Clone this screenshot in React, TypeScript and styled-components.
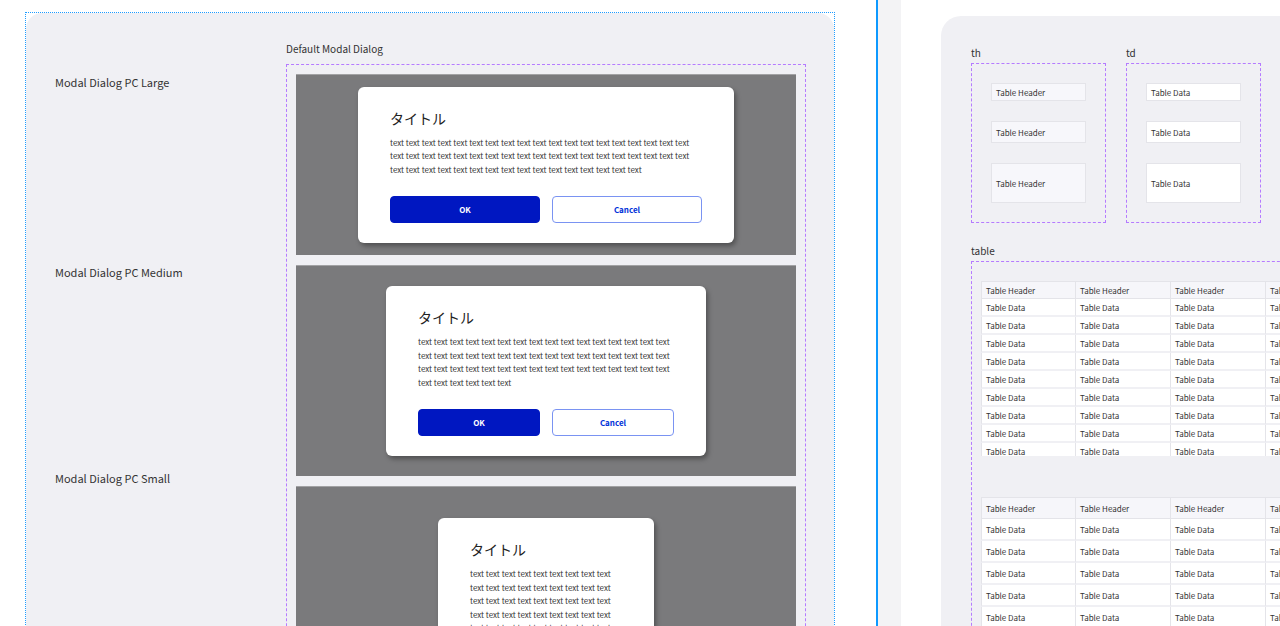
import styled, { createGlobalStyle } from 'styled-components';

const GlobalStyle = createGlobalStyle`
  html, body {
    margin: 0;
    padding: 0;
    background: #ffffff;
    overflow: hidden;
  }
  body {
    font-family: "Noto Sans CJK JP", "Noto Sans", sans-serif;
    color: #333333;
  }
  * {
    box-sizing: border-box;
  }
`;

type Size = 'large' | 'medium' | 'small';

const modalWidth: Record<Size, number> = { large: 376, medium: 320, small: 216 };
const textWidth: Record<Size, number> = { large: 300, medium: 256, small: 152 };

const bodyText = Array(54).fill('text').join(' ');

const frames: { size: Size; height: number; align: 'center' | 'top' }[] = [
  { size: 'large', height: 181, align: 'center' },
  { size: 'medium', height: 211, align: 'center' },
  { size: 'small', height: 320, align: 'top' },
];

const labels = [
  { text: 'Modal Dialog PC Large', top: 33 },
  { text: 'Modal Dialog PC Medium', top: 176 },
  { text: 'Modal Dialog PC Small', top: 192 },
];

const cellSamples = [18, 22, 40];
const columns = [0, 1, 2, 3, 4, 5];

const Modal = ({ size }: { size: Size }) => (
  <Dialog $width={modalWidth[size]}>
    <Title>タイトル</Title>
    <Body $width={textWidth[size]}>{bodyText}</Body>
    <Actions>
      <Button $primary>OK</Button>
      <Button>Cancel</Button>
    </Actions>
  </Dialog>
);

const DataTable = ({ rows, rowHeight }: { rows: number; rowHeight: number }) => (
  <Table>
    <thead>
      <tr>
        {columns.map((c) => (
          <HeadCell key={c} $height={rowHeight}>
            Table Header
          </HeadCell>
        ))}
      </tr>
    </thead>
    <tbody>
      {Array.from({ length: rows }).map((_, r) => (
        <tr key={r}>
          {columns.map((c) => (
            <DataCell key={c} $height={rowHeight}>
              Table Data
            </DataCell>
          ))}
        </tr>
      ))}
    </tbody>
  </Table>
);

export default function App() {
  return (
    <>
      <GlobalStyle />
      <Canvas>
        <Selection>
          <Panel>
            <LabelColumn>
              {labels.map((l) => (
                <RowLabel key={l.text} $top={l.top}>
                  {l.text}
                </RowLabel>
              ))}
            </LabelColumn>
            <div>
              <Caption>Default Modal Dialog</Caption>
              <DashedBox>
                {frames.map((f) => (
                  <Frame key={f.size} $height={f.height} $align={f.align}>
                    <Modal size={f.size} />
                  </Frame>
                ))}
              </DashedBox>
            </div>
          </Panel>
        </Selection>
        <SectionEdge />
        <Gutter />
        <RightPanel>
          <CellGroups>
            <div>
              <Caption>th</Caption>
              <CellBox>
                {cellSamples.map((h) => (
                  <SampleCell key={h} $height={h} $head>
                    Table Header
                  </SampleCell>
                ))}
              </CellBox>
            </div>
            <div>
              <Caption>td</Caption>
              <CellBox>
                {cellSamples.map((h) => (
                  <SampleCell key={h} $height={h}>
                    Table Data
                  </SampleCell>
                ))}
              </CellBox>
            </div>
          </CellGroups>
          <TableSection>
            <Caption>table</Caption>
            <TableBox>
              <ScrollArea>
                <DataTable rows={10} rowHeight={18} />
              </ScrollArea>
              <TableGap />
              <DataTable rows={6} rowHeight={22} />
            </TableBox>
          </TableSection>
        </RightPanel>
      </Canvas>
    </>
  );
}

const Canvas = styled.div`
  display: flex;
  align-items: flex-start;
  height: 626px;
  width: 1280px;
  overflow: hidden;
  padding-left: 25px;
`;

const Selection = styled.div`
  flex-shrink: 0;
  margin-top: 12px;
  border: 1px dotted #1f9cff;
  border-bottom: none;
`;

const Panel = styled.div`
  width: 808px;
  height: 700px;
  background: #f0f0f4;
  border-radius: 16px 16px 0 0;
  padding: 29px 28px 0 29px;
  display: grid;
  grid-template-columns: 231px 520px;
`;

const LabelColumn = styled.div`
  display: flex;
  flex-direction: column;
`;

const RowLabel = styled.div<{ $top: number }>`
  margin-top: ${({ $top }) => $top}px;
  font-size: 11px;
  line-height: 14px;
  color: #333333;
`;

const Caption = styled.div`
  font-size: 10px;
  line-height: 14px;
  color: #333333;
  margin-bottom: 3px;
`;

const DashedBox = styled.div`
  margin-top: 8px;
  width: 520px;
  border: 1px dashed #b57bff;
  border-bottom: none;
  padding: 9px 9px 0;
  display: flex;
  flex-direction: column;
  gap: 10px;
`;

const Frame = styled.div<{ $height: number; $align: 'center' | 'top' }>`
  height: ${({ $height }) => $height}px;
  background: #7a7a7c;
  border-top: 1px solid #a2a2a4;
  display: flex;
  justify-content: center;
  align-items: ${({ $align }) => ($align === 'center' ? 'center' : 'flex-start')};
  padding-top: ${({ $align }) => ($align === 'top' ? '31px' : '0')};
`;

const Dialog = styled.div<{ $width: number }>`
  width: ${({ $width }) => $width}px;
  background: #ffffff;
  border-radius: 6px;
  box-shadow: 2px 3px 5px rgba(0, 0, 0, 0.35);
  padding: 21px 32px 20px;
`;

const Title = styled.h2`
  margin: 0 0 7px;
  font-size: 14px;
  line-height: 21px;
  font-weight: 400;
  color: #222222;
`;

const Body = styled.p<{ $width: number }>`
  margin: 0;
  max-width: ${({ $width }) => $width}px;
  font-size: 8px;
  line-height: 13.5px;
  color: #333333;
`;

const Actions = styled.div`
  display: flex;
  gap: 12px;
  margin-top: 20px;
`;

const Button = styled.button<{ $primary?: boolean }>`
  flex: 1;
  height: 27px;
  border-radius: 4px;
  font-family: inherit;
  font-size: 8px;
  font-weight: 700;
  cursor: pointer;
  background: ${({ $primary }) => ($primary ? '#0017c1' : '#ffffff')};
  color: ${({ $primary }) => ($primary ? '#ffffff' : '#0031d8')};
  border: 1px solid ${({ $primary }) => ($primary ? '#0017c1' : '#7a93f2')};
`;

const SectionEdge = styled.div`
  flex-shrink: 0;
  margin-left: 41px;
  width: 2px;
  height: 100%;
  background: #0d99ff;
`;

const Gutter = styled.div`
  flex-shrink: 0;
  width: 23px;
  height: 100%;
  background: #f3f3f5;
`;

const RightPanel = styled.div`
  flex-shrink: 0;
  margin-left: 40px;
  margin-top: 16px;
  width: 760px;
  height: 700px;
  background: #f0f0f4;
  border-radius: 20px 0 0 0;
  padding: 30px;
`;

const CellGroups = styled.div`
  display: flex;
  gap: 20px;
`;

const CellBox = styled.div`
  width: 135px;
  height: 160px;
  border: 1px dashed #b57bff;
  padding: 19px;
  display: flex;
  flex-direction: column;
  gap: 20px;
`;

const SampleCell = styled.div<{ $height: number; $head?: boolean }>`
  width: 95px;
  height: ${({ $height }) => $height}px;
  background: ${({ $head }) => ($head ? '#f7f7fb' : '#ffffff')};
  border: 1px solid #e4e4e9;
  padding: 0 4px;
  display: flex;
  align-items: center;
  font-size: 8px;
  color: #333333;
`;

const TableSection = styled.div`
  margin-top: 21px;
`;

const TableBox = styled.div`
  border: 1px dashed #b57bff;
  border-right: none;
  border-bottom: none;
  padding: 19px 9px 0;
  height: 400px;
`;

const ScrollArea = styled.div`
  height: 175px;
  overflow: hidden;
`;

const TableGap = styled.div`
  height: 41px;
`;

const Table = styled.table`
  border-collapse: separate;
  border-spacing: 0;
  table-layout: fixed;
`;

const HeadCell = styled.th<{ $height: number }>`
  width: 95px;
  min-width: 95px;
  height: ${({ $height }) => $height}px;
  padding: 0 4px;
  text-align: left;
  font-size: 8px;
  font-weight: 400;
  color: #333333;
  background: #f6f6fa;
  border-top: 1px solid #e4e4e9;
  border-bottom: 1px solid #e4e4e9;
  border-right: 1px solid #e4e4e9;
  &:first-child {
    border-left: 1px solid #e4e4e9;
  }
`;

const DataCell = styled.td<{ $height: number }>`
  width: 95px;
  height: ${({ $height }) => $height}px;
  padding: 0 4px;
  font-size: 8px;
  color: #333333;
  background: #ffffff;
  border-bottom: 2px solid #f0f0f4;
  border-right: 1px solid #e4e4e9;
  &:first-child {
    border-left: 1px solid #e4e4e9;
  }
`;
